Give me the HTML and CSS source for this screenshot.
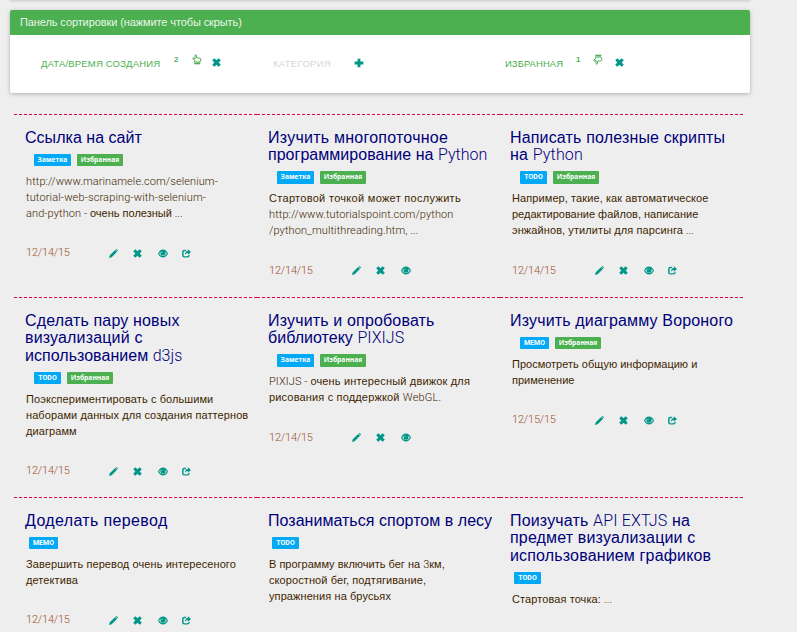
FILE: index.html
```html
<!DOCTYPE html>
<html lang="ru">
<head>
<meta charset="utf-8">
<title>Заметки</title>
<link rel="stylesheet" href="styles.css">
</head>
<body>
<svg class="defs" width="0" height="0">
  <symbol id="pencil" viewBox="0 0 12 12"><path d="M0 12l1-3.6L8.200 1.200l2.600 2.600L3.600 11zM8.900.600l.6-.5q.4-.2.8.1l1.500 1.500q.3.400 0 .8l-.5.600z"/></symbol>
  <symbol id="remove" viewBox="0 0 12 12"><path d="M3.100.300L6 3.100 8.900.300l2.800 2.800L8.900 6l2.800 2.900-2.800 2.800L6 8.900l-2.900 2.800L.300 8.900 3.100 6 .300 3.100z"/></symbol>
  <symbol id="plus" viewBox="0 0 12 12"><path d="M4.300.800h3.400v3.500h3.500v3.400H7.700v3.500H4.300V7.700H.800V4.300h3.500z"/></symbol>
  <symbol id="eye" viewBox="0 0 14 12"><path fill-rule="evenodd" d="M7 .4Q11.500.4 14 6Q11.500 11.600 7 11.600Q2.500 11.600 0 6Q2.500.4 7 .4zM3.800 3.600Q2.300 4.600 1.600 6Q3.500 9.500 7 9.500Q10.500 9.500 12.400 6Q11.700 4.600 10.200 3.600Q10.600 4.300 10.600 5.200A3.600 3.600 0 0 1 3.400 5.200Q3.400 4.300 3.800 3.600zM5.500 3.200Q4.800 4 5.100 5Q6 5.300 6.200 4.200Q6.300 3 5.500 3.200z"/></symbol>
  <symbol id="share" viewBox="0 0 14 13"><path d="M7 .8H3.500Q.2.800.2 4V9.500Q.2 12.800 3.500 12.800H8.500Q11.900 12.800 11.900 9.500V8L9.700 9.700Q9.500 10.600 8.500 10.600H3.500Q2.500 10.600 2.500 9.500V4Q2.500 3 3.500 3H5.500Q6 1.900 7 .8zM9.100 0L14 4.200 9.100 8.400V5.900Q6.300 5.800 4.700 8.600Q4.700 2.800 9.100 2.500z"/></symbol>
  <symbol id="hand" viewBox="0 0 10 11"><path fill="none" stroke="currentColor" stroke-width="1" d="M2.700 8V6.800L.7 4.600Q.8 3.700 1.800 4.100L3 5V1.200Q3.700.1 4.400 1.200V3.600L7.800 4.100Q9 4.300 8.900 5.300L8 8z"/><path d="M2.300 8.700h6v1.600h-6z"/></symbol>
</svg>

<div class="prev-panel"></div>
<section class="panel">
  <header class="panel-head">Панель сортировки (нажмите чтобы скрыть)</header>
  <div class="sorts">
    <div class="sort date"><span class="name">ДАТА/ВРЕМЯ СОЗДАНИЯ</span><sup>2</sup><svg class="hand"><use href="#hand"/></svg><svg class="ic"><use href="#remove"/></svg></div>
    <div class="sort off"><span class="name">КАТЕГОРИЯ</span><svg class="ic plus"><use href="#plus"/></svg></div>
    <div class="sort fav"><span class="name">ИЗБРАННАЯ</span><sup>1</sup><svg class="hand down"><use href="#hand"/></svg><svg class="ic"><use href="#remove"/></svg></div>
  </div>
</section>

<main class="cards">
  <article class="card">
    <h2 class="tight">Ссылка на сайт</h2>
    <div class="tags two"><span class="tag note">Заметка</span><span class="tag star">Избранная</span></div>
    <p><i>http://www.marinamele.com/selenium-<br><span class="wide-url">tutorial-web-scraping-with-selenium-</span><br>and-python - </i><span class="tight">очень полезный</span><i> ...</i></p>
    <footer><time>12/14/15</time><svg class="ic"><use href="#pencil"/></svg><svg class="ic"><use href="#remove"/></svg><svg class="ic eye"><use href="#eye"/></svg><svg class="ic"><use href="#share"/></svg></footer>
  </article>
  <article class="card">
    <h2><span class="wide">Изучить многопоточное</span><br><span class="tight">программирование на <i>Python</i></span></h2>
    <div class="tags two"><span class="tag note">Заметка</span><span class="tag star">Избранная</span></div>
    <p><span class="wide">Стартовой точкой может послужить</span><br><i>http://www.tutorialspoint.com/python<br>/python_multithreading.htm, ...</i></p>
    <footer><time>12/14/15</time><svg class="ic"><use href="#pencil"/></svg><svg class="ic"><use href="#remove"/></svg><svg class="ic eye"><use href="#eye"/></svg></footer>
  </article>
  <article class="card last">
    <h2>Написать полезные скрипты<br>на <i>Python</i></h2>
    <div class="tags two"><span class="tag todo">TODO</span><span class="tag star">Избранная</span></div>
    <p>Например, такие, как автоматическое<br><span class="tight">редактирование файлов, написание</span><br>энжайнов, утилиты для парсинга<i> ...</i></p>
    <footer><time>12/14/15</time><svg class="ic"><use href="#pencil"/></svg><svg class="ic"><use href="#remove"/></svg><svg class="ic eye"><use href="#eye"/></svg><svg class="ic"><use href="#share"/></svg></footer>
  </article>

  <article class="card">
    <h2>Сделать пару новых<br>визуализаций с<br><span class="tight">использованием <i>d3js</i></span></h2>
    <div class="tags two"><span class="tag todo">TODO</span><span class="tag star">Избранная</span></div>
    <p>Поэкспериментировать с большими<br>наборами данных для создания паттернов<br>диаграмм</p>
    <footer><time>12/14/15</time><svg class="ic"><use href="#pencil"/></svg><svg class="ic"><use href="#remove"/></svg><svg class="ic eye"><use href="#eye"/></svg><svg class="ic"><use href="#share"/></svg></footer>
  </article>
  <article class="card">
    <h2>Изучить и опробовать<br><span class="tight">библиотеку <i>PIXIJS</i></span></h2>
    <div class="tags two"><span class="tag note">Заметка</span><span class="tag star">Избранная</span></div>
    <p><i>PIXIJS - </i><span class="mid">очень интересный движок для</span><br><span class="mid">рисования с поддержкой <i>WebGL.</i></span></p>
    <footer><time>12/14/15</time><svg class="ic"><use href="#pencil"/></svg><svg class="ic"><use href="#remove"/></svg><svg class="ic eye"><use href="#eye"/></svg></footer>
  </article>
  <article class="card last">
    <h2>Изучить диаграмму Вороного</h2>
    <div class="tags two"><span class="tag memo">MEMO</span><span class="tag star">Избранная</span></div>
    <p><span class="tight">Просмотреть общую информацию и</span><br><span class="tight">применение</span></p>
    <footer><time>12/15/15</time><svg class="ic"><use href="#pencil"/></svg><svg class="ic"><use href="#remove"/></svg><svg class="ic eye"><use href="#eye"/></svg><svg class="ic"><use href="#share"/></svg></footer>
  </article>

  <article class="card">
    <h2 class="wide">Доделать перевод</h2>
    <div class="tags"><span class="tag memo">MEMO</span></div>
    <p>Завершить перевод очень интересеного<br>детектива</p>
    <footer><time>12/14/15</time><svg class="ic"><use href="#pencil"/></svg><svg class="ic"><use href="#remove"/></svg><svg class="ic eye"><use href="#eye"/></svg><svg class="ic"><use href="#share"/></svg></footer>
  </article>
  <article class="card">
    <h2 class="tight">Позаниматься спортом в лесу</h2>
    <div class="tags"><span class="tag todo">TODO</span></div>
    <p><span class="tight">В программу включить бег на <i>3</i>км,</span><br>скоростной бег, подтягивание,<br>упражнения на брусьях</p>
    <footer><time></time><svg class="ic"><use href="#pencil"/></svg></footer>
  </article>
  <article class="card last single">
    <h2>Поизучать <i>API EXTJS</i> на<br>предмет визуализации с<br>использованием графиков</h2>
    <div class="tags"><span class="tag todo">TODO</span></div>
    <p>Стартовая точка: <i>...</i></p>
  </article>
</main>
</body>
</html>
```

FILE: styles.css
```css
* { box-sizing: border-box; }
html, body { height: 632px; overflow: hidden; }
body { margin: 0; background: #eee; font-family: "Liberation Sans", sans-serif; }
i { font-style: normal; font-family: Roboto, sans-serif; font-weight: 300; line-height: 0; }
.defs { position: absolute; }
svg { fill: currentColor; overflow: visible; flex: none; }

.prev-panel { width: 740px; height: 10px; margin-left: 10px; margin-top: -10px; box-shadow: 0 1px 3px rgba(0,0,0,.16); }
.panel { width: 740px; height: 83px; margin: 10px 0 0 10px; background: #fff; border-radius: 2px; box-shadow: 0 1px 4px rgba(0,0,0,.26); }
.panel-head { height: 25px; padding-left: 10px; background: #4caf50; color: #eaf6ea; font-size: 11px; line-height: 25px; letter-spacing: -.1px; border-radius: 2px 2px 0 0; }
.sorts { display: grid; grid-template-columns: 231px 233px 1fr; padding: 20px 0 0 31px; }
.sort { display: flex; align-items: flex-start; height: 17px; color: #4caf50; font-size: 9.500px; line-height: 18px; white-space: nowrap; }
.name { width: 133px; letter-spacing: .17px; }
.off { color: #d6d6d6; }
.off .name { width: 82px; padding-left: 1px; letter-spacing: .3px; }
.fav .name { width: 71px; letter-spacing: .03px; }
.sort sup { width: 17.500px; font: bold 8px/9px "Liberation Sans", sans-serif; }
.hand { width: 10px; height: 11px; margin-right: 10.500px; margin-top: -1px; }
.down { transform: scaleY(-1); margin-left: -1px; margin-right: 11.500px; }
.fav .ic { margin-left: 1px; }
.ic { width: 9px; height: 9px; color: #009688; }
.sort .ic { margin-top: 3px; }
.sort .plus { width: 10px; height: 10px; }

.cards { display: grid; grid-template-columns: repeat(3, 243px); grid-template-rows: 183px 200px 134px; margin: 21px 0 0 14px; }
.card { min-height: 0; border-top: 1px dashed #e4003a; padding: 13.700px 0 0 11px; white-space: nowrap; }
h2 { margin: 0; font-size: 16px; font-weight: 400; line-height: 17.500px; letter-spacing: .16px; color: #00007b; }
h2 .wide { letter-spacing: .24px; }
h2.wide { letter-spacing: .36px; }
h2 .tight, h2.tight { letter-spacing: .03px; }
.last h2 { margin-left: -1px; }
.tags { display: flex; gap: 6px; padding: 7.800px 0 0 4px; height: 26.400px; }
.two { padding-left: 9px; }
.single .tags { padding-left: 3px; }
.tag { height: 12.500px; border-radius: 1px; color: #fff; font: bold 6.700px/12px "Open Sans", sans-serif; text-align: center; background: #03a9f4; }
.note { width: 37px; }
.todo { width: 27px; font: bold 7px/12px Roboto, sans-serif; }
.memo { width: 29px; font: bold 7px/12px Roboto, sans-serif; }
.star { width: 46px; background: #4caf50; }
p { margin: 0; padding-left: 1px; font-size: 11px; line-height: 16px; letter-spacing: .09px; color: #3e1f00; }
p .wide { letter-spacing: .3px; }
p .mid { letter-spacing: .16px; }
p .wide-url { letter-spacing: .14px; }
p .tight { letter-spacing: 0; }
.card footer { display: flex; align-items: center; height: 16px; margin-top: 24.700px; padding-left: 1px; }
time { width: 83px; font: 300 11px/16px Roboto, sans-serif; letter-spacing: -.2px; color: #a0522d; }
.card .ic { margin-right: 15.300px; }
.card .eye { width: 10px; margin-right: 14.300px; }
```
